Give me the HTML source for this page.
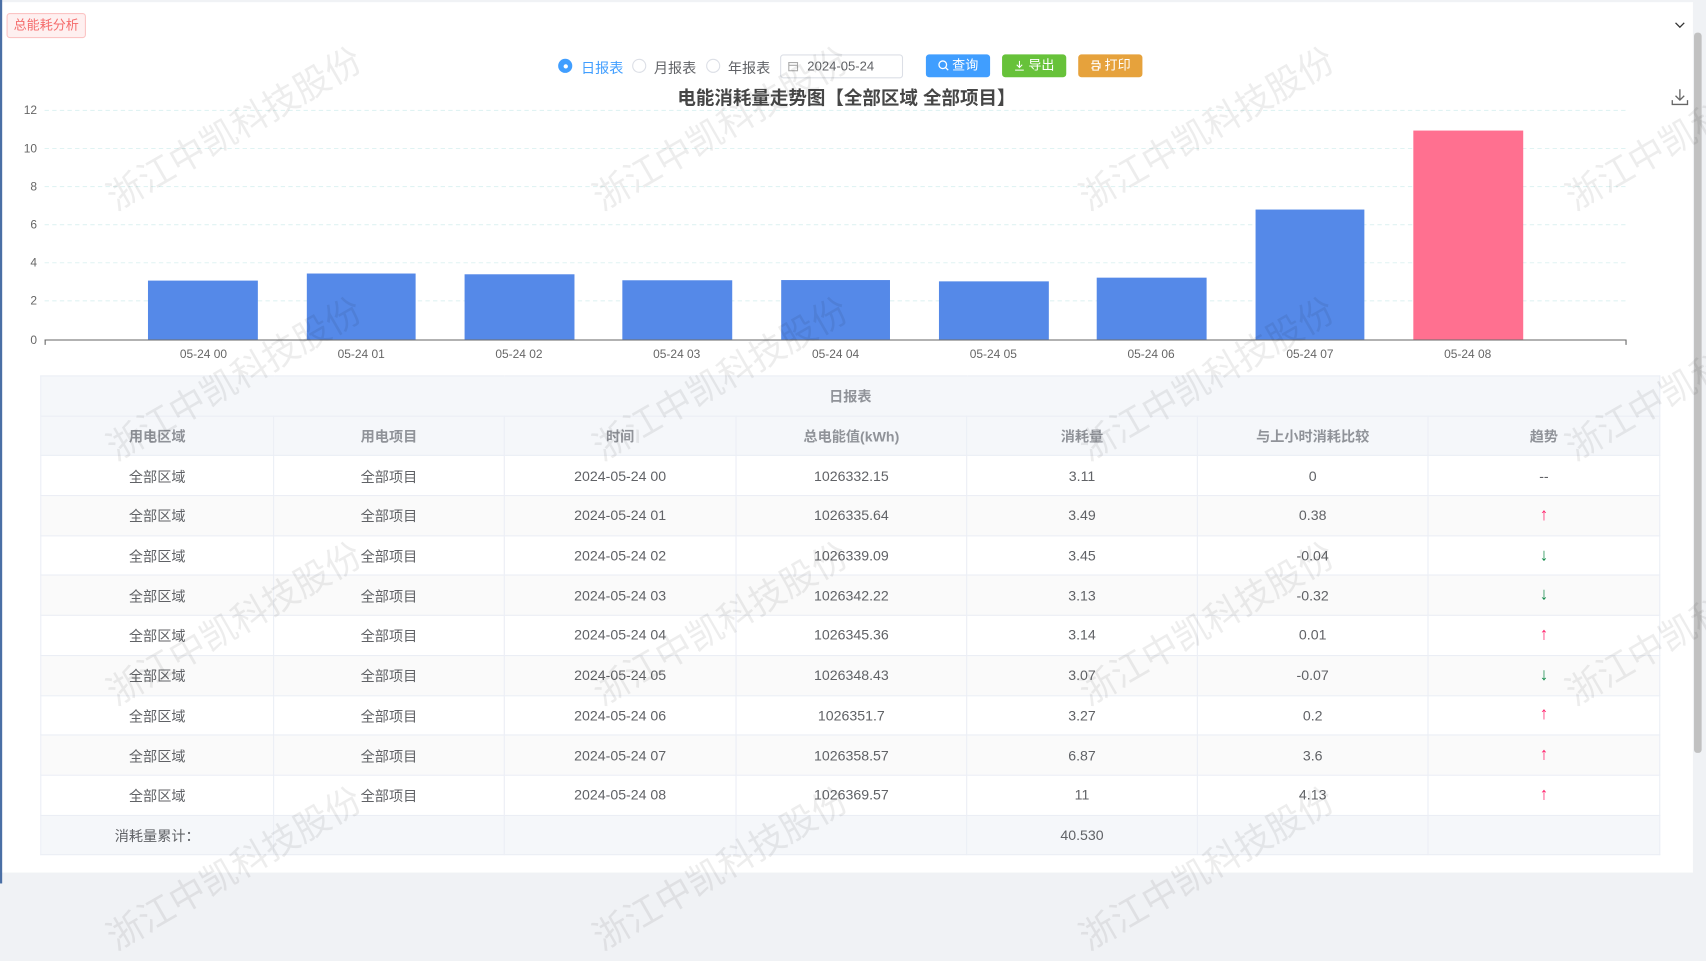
<!DOCTYPE html>
<html><head><meta charset="utf-8">
<style>
*{margin:0;padding:0;box-sizing:border-box}
html,body{width:1706px;height:884px;overflow:hidden;background:#f0f2f5;font-family:"Liberation Sans","Noto Sans CJK SC",sans-serif}
#w{position:absolute;left:0;top:0;width:1568px;height:812px;transform:scale(1.08801);transform-origin:0 0;background:#f0f2f5}
.card{position:absolute;left:2px;top:2px;width:1554px;height:800px;background:#fff}
.tag{position:absolute;left:6px;top:12px;width:73px;height:23px;border:1px solid #fbc4c4;background:#fef0f0;color:#f56c6c;font-size:12px;line-height:21px;text-align:center;border-radius:3px}
.abs{position:absolute}
.radio{position:absolute;top:54px;width:13px;height:13px;border:1px solid #dcdfe6;border-radius:50%;background:#fff}
.radio.on{border-color:#409eff;background:#409eff}
.radio.on:after{content:"";position:absolute;left:3.5px;top:3.5px;width:4px;height:4px;border-radius:50%;background:#fff}
.rl{position:absolute;top:52px;font-size:13px;color:#606266}
.btn{position:absolute;top:50px;height:21px;width:59px;border-radius:3px;color:#fff;font-size:12px;line-height:21px;text-align:center}
table{position:absolute;left:37px;top:345px;width:1488px;border-collapse:collapse;font-size:13px;color:#606266;table-layout:fixed}
td,th{border:1px solid #ebeef5;height:36.7px;text-align:center;font-weight:normal}
th{background:#f5f7fa;color:#909399;font-weight:bold;font-size:13px}
tr.s td{background:#fafafa}
.up{color:#ff1f6a;font-size:16px}
.dn{color:#138a4a;font-size:16px}
.wm{position:absolute;font-size:33px;color:rgba(0,0,0,0.07);transform:rotate(-30deg);white-space:nowrap;pointer-events:none;font-family:"Noto Sans CJK SC",sans-serif}
</style></head><body><div id="w">
<div class="card"></div>
<div class="abs" style="left:1557px;top:30px;width:7px;height:662px;background:#c1c1c1;border-radius:3px"></div>
<div class="abs" style="left:0;top:0;width:2px;height:812px;background:#4a6fa5"></div>
<div class="tag">总能耗分析</div>
<svg class="abs" style="left:1538px;top:18px" width="12" height="10"><path d="M2 3l4 4 4-4" stroke="#333" fill="none" stroke-width="1.2"/></svg>
<div class="radio on" style="left:513px"></div><div class="rl" style="left:534px;color:#409eff">日报表</div>
<div class="radio" style="left:581px"></div><div class="rl" style="left:601px">月报表</div>
<div class="radio" style="left:649px"></div><div class="rl" style="left:669px">年报表</div>
<div class="abs" style="left:717px;top:50px;width:113px;height:22px;border:1px solid #dcdfe6;border-radius:3px;font-size:12px;color:#606266;line-height:20px;padding-left:24px">2024-05-24</div>
<svg class="abs" style="left:724px;top:56px" width="10" height="10"><rect x="1" y="1.5" width="8" height="7.5" fill="none" stroke="#aaa"/><path d="M1 4h8" stroke="#aaa"/></svg>
<div class="btn" style="left:851px;background:#409eff"><svg width="10" height="10" style="vertical-align:-1px"><circle cx="4.5" cy="4.5" r="3.5" stroke="#fff" fill="none" stroke-width="1.2"/><path d="M7 7l2.5 2.5" stroke="#fff" stroke-width="1.2"/></svg> 查询</div>
<div class="btn" style="left:921px;background:#67c23a"><svg width="10" height="10" style="vertical-align:-1px"><path d="M5 1v6M2.5 4.5L5 7l2.5-2.5M1 9.5h8" stroke="#fff" fill="none"/></svg> 导出</div>
<div class="btn" style="left:991px;background:#e6a23c"><svg width="10" height="10" style="vertical-align:-1px"><path d="M2.5 3.5V1h5v2.5M1 3.5h8v4H7.5M2.5 7.5H1M2.5 6h5v3.5h-5z" stroke="#fff" fill="none"/></svg> 打印</div>
<div class="abs" style="left:0;width:1556px;top:76px;text-align:center;font-size:17px;font-weight:bold;color:#464646">电能消耗量走势图【全部区域 全部项目】</div>
<svg class="abs" style="left:1536px;top:81px" width="16" height="16"><path d="M8 1v10M4 7l4 4 4-4M1 11v4h14v-4" stroke="#666" fill="none" stroke-width="1.2"/></svg>
<svg class="abs" style="left:0;top:90px" width="1556" height="250">
<g stroke="#e0f3f3" stroke-dasharray="4 3">
<line x1="41" x2="1494" y1="11.5" y2="11.5"/><line x1="41" x2="1494" y1="46.5" y2="46.5"/><line x1="41" x2="1494" y1="81.5" y2="81.5"/><line x1="41" x2="1494" y1="116.5" y2="116.5"/><line x1="41" x2="1494" y1="151.5" y2="151.5"/><line x1="41" x2="1494" y1="186.5" y2="186.5"/>
</g>
<g font-size="11" fill="#666" text-anchor="end" font-family="Liberation Sans">
<text x="34" y="15">12</text><text x="34" y="50">10</text><text x="34" y="85">8</text><text x="34" y="120">6</text><text x="34" y="155">4</text><text x="34" y="190">2</text><text x="34" y="226">0</text>
</g>
<g fill="#5589e8">
<rect x="136" y="167.9" width="101" height="54.1"/>
<rect x="282" y="161.4" width="100" height="60.6"/>
<rect x="427" y="162.1" width="101" height="59.9"/>
<rect x="572" y="167.6" width="101" height="54.4"/>
<rect x="718" y="167.4" width="100" height="54.6"/>
<rect x="863" y="168.6" width="101" height="53.4"/>
<rect x="1008" y="165.2" width="101" height="56.8"/>
<rect x="1154" y="102.6" width="100" height="119.4"/>
</g>
<rect x="1299" y="30" width="101" height="192" fill="#ff7090"/>
<line x1="41" x2="1494" y1="222.5" y2="222.5" stroke="#666"/>
<g stroke="#666"><line x1="41.5" x2="41.5" y1="222" y2="227"/><line x1="1494.5" x2="1494.5" y1="222" y2="227"/></g>
<g font-size="11" fill="#666" text-anchor="middle" font-family="Liberation Sans">
<text x="187" y="239">05-24 00</text><text x="332" y="239">05-24 01</text><text x="477" y="239">05-24 02</text><text x="622" y="239">05-24 03</text><text x="768" y="239">05-24 04</text><text x="913" y="239">05-24 05</text><text x="1058" y="239">05-24 06</text><text x="1204" y="239">05-24 07</text><text x="1349" y="239">05-24 08</text>
</g>
</svg>
<table>
<colgroup><col style="width:214px"><col style="width:212px"><col style="width:213px"><col style="width:212px"><col style="width:212px"><col style="width:212px"><col style="width:213px"></colgroup>
<tr><th colspan="7">日报表</th></tr>
<tr><th>用电区域</th><th>用电项目</th><th>时间</th><th>总电能值(kWh)</th><th>消耗量</th><th>与上小时消耗比较</th><th>趋势</th></tr>
<tr><td>全部区域</td><td>全部项目</td><td>2024-05-24 00</td><td>1026332.15</td><td>3.11</td><td>0</td><td>--</td></tr>
<tr class="s"><td>全部区域</td><td>全部项目</td><td>2024-05-24 01</td><td>1026335.64</td><td>3.49</td><td>0.38</td><td class="up">↑</td></tr>
<tr><td>全部区域</td><td>全部项目</td><td>2024-05-24 02</td><td>1026339.09</td><td>3.45</td><td>-0.04</td><td class="dn">↓</td></tr>
<tr class="s"><td>全部区域</td><td>全部项目</td><td>2024-05-24 03</td><td>1026342.22</td><td>3.13</td><td>-0.32</td><td class="dn">↓</td></tr>
<tr><td>全部区域</td><td>全部项目</td><td>2024-05-24 04</td><td>1026345.36</td><td>3.14</td><td>0.01</td><td class="up">↑</td></tr>
<tr class="s"><td>全部区域</td><td>全部项目</td><td>2024-05-24 05</td><td>1026348.43</td><td>3.07</td><td>-0.07</td><td class="dn">↓</td></tr>
<tr><td>全部区域</td><td>全部项目</td><td>2024-05-24 06</td><td>1026351.7</td><td>3.27</td><td>0.2</td><td class="up">↑</td></tr>
<tr class="s"><td>全部区域</td><td>全部项目</td><td>2024-05-24 07</td><td>1026358.57</td><td>6.87</td><td>3.6</td><td class="up">↑</td></tr>
<tr><td>全部区域</td><td>全部项目</td><td>2024-05-24 08</td><td>1026369.57</td><td>11</td><td>4.13</td><td class="up">↑</td></tr>
<tr><td style="background:#f5f7fa">消耗量累计：</td><td style="background:#f5f7fa"></td><td style="background:#f5f7fa"></td><td style="background:#f5f7fa"></td><td style="background:#f5f7fa">40.530</td><td style="background:#f5f7fa"></td><td style="background:#f5f7fa"></td></tr>
</table>
<div class="wm" style="left:82px;top:92px">浙江中凯科技股份</div>
<div class="wm" style="left:529px;top:92px">浙江中凯科技股份</div>
<div class="wm" style="left:976px;top:92px">浙江中凯科技股份</div>
<div class="wm" style="left:1423px;top:92px">浙江中凯科技股份</div>
<div class="wm" style="left:82px;top:322px">浙江中凯科技股份</div>
<div class="wm" style="left:529px;top:322px">浙江中凯科技股份</div>
<div class="wm" style="left:976px;top:322px">浙江中凯科技股份</div>
<div class="wm" style="left:1423px;top:322px">浙江中凯科技股份</div>
<div class="wm" style="left:82px;top:547px">浙江中凯科技股份</div>
<div class="wm" style="left:529px;top:547px">浙江中凯科技股份</div>
<div class="wm" style="left:976px;top:547px">浙江中凯科技股份</div>
<div class="wm" style="left:1423px;top:547px">浙江中凯科技股份</div>
<div class="wm" style="left:82px;top:772px">浙江中凯科技股份</div>
<div class="wm" style="left:529px;top:772px">浙江中凯科技股份</div>
<div class="wm" style="left:976px;top:772px">浙江中凯科技股份</div>
</div></body></html>
